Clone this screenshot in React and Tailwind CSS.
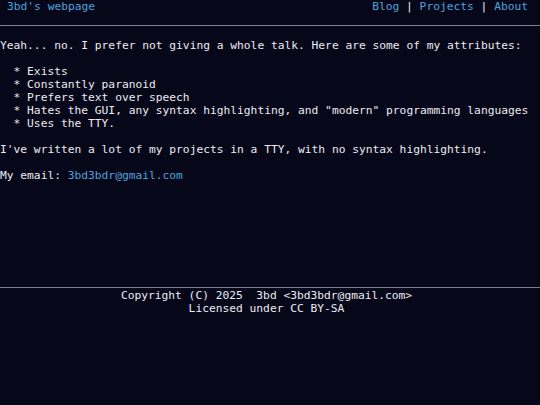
export default function App() {
  const mono = { fontFamily: '"DejaVu Sans Mono", monospace' };
  return (
    <div
      className="min-h-[405px] w-full bg-[#07071a] text-[#ececf0] text-[11.25px] leading-[13px]"
      style={mono}
    >
      {/* Header */}
      <header className="flex justify-between h-[26px] border-b border-[#7c7c8c] pl-[7px] pr-[12px]">
        <a href="#" className="text-[#4fa3dc]">3bd's webpage</a>
        <nav className="flex">
          <a href="#" className="text-[#4fa3dc]">Blog</a>
          <span className="whitespace-pre"> | </span>
          <a href="#" className="text-[#4fa3dc]">Projects</a>
          <span className="whitespace-pre"> | </span>
          <a href="#" className="text-[#4fa3dc]">About</a>
        </nav>
      </header>

      {/* Main */}
      <main className="h-[261px] pt-[13px]">
        <pre className="m-0 whitespace-pre" style={mono}>
{`Yeah... no. I prefer not giving a whole talk. Here are some of my attributes:

  * Exists
  * Constantly paranoid
  * Prefers text over speech
  * Hates the GUI, any syntax highlighting, and "modern" programming languages
  * Uses the TTY.

I've written a lot of my projects in a TTY, with no syntax highlighting.

My email: `}<a href="#" className="text-[#4fa3dc]">3bd3bdr@gmail.com</a>
        </pre>
      </main>

      {/* Footer */}
      <footer className="border-t border-[#7c7c8c] text-center pt-[1px] pr-[7px]">
        <p className="whitespace-pre">Copyright (C) 2025  3bd &lt;3bd3bdr@gmail.com&gt;</p>
        <p>Licensed under CC BY-SA</p>
      </footer>
    </div>
  );
}
